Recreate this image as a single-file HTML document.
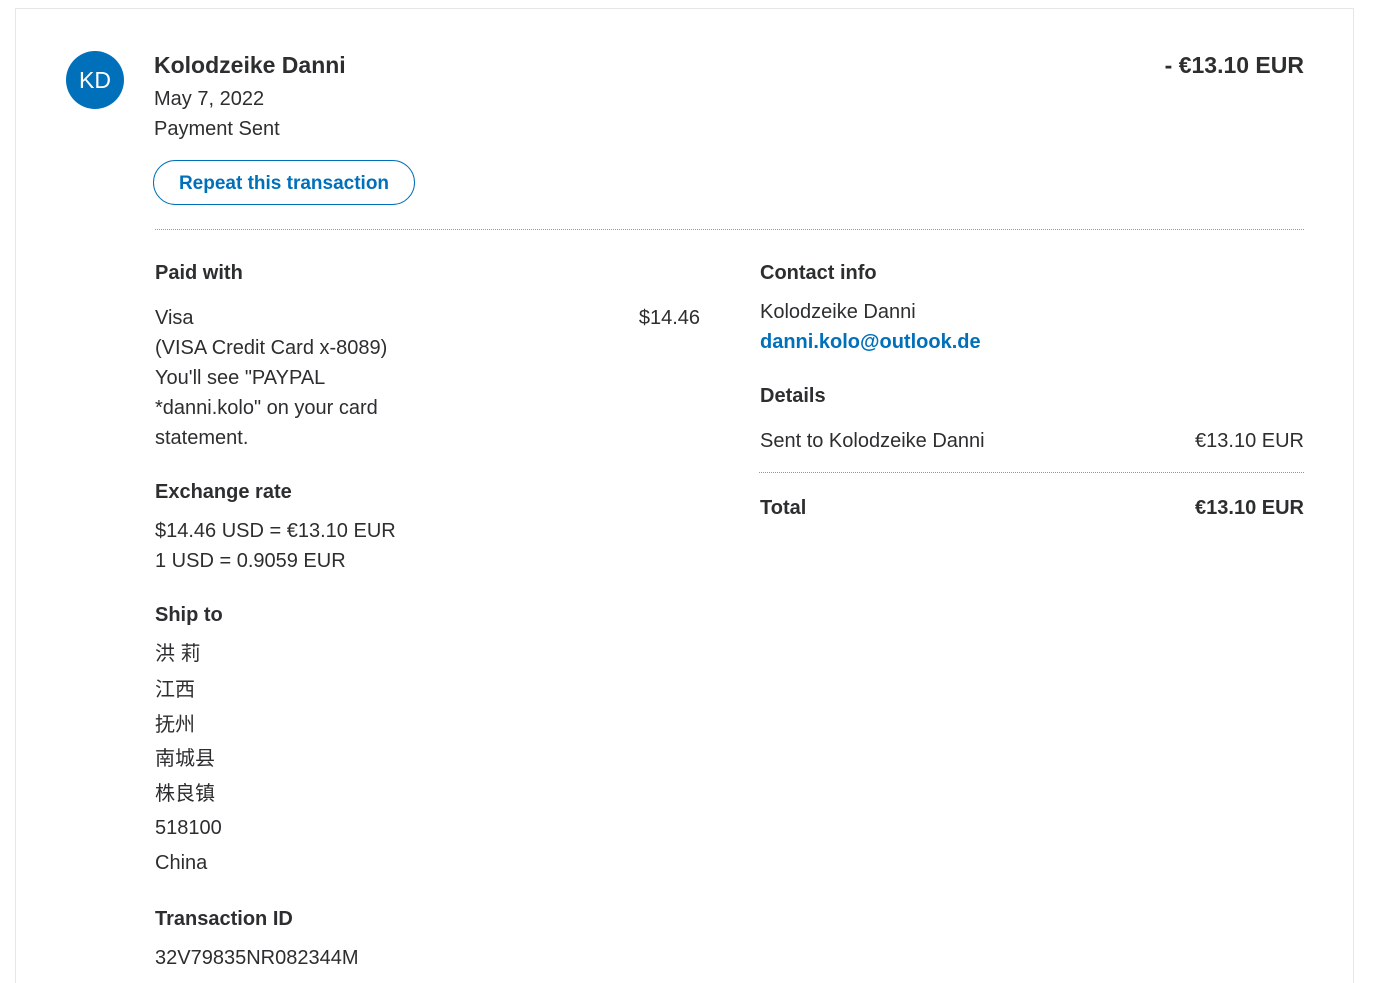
<!DOCTYPE html>
<html><head><meta charset="utf-8"><style>
*{margin:0;padding:0;box-sizing:border-box}
html,body{width:1377px;height:983px;overflow:hidden}
body{background:#fff;font-family:"Liberation Sans","Noto Sans CJK SC",sans-serif;color:#2c2e2f;position:relative}
.card{position:absolute;left:15px;top:8px;width:1339px;height:975px;border:1px solid #e6e6e6;border-bottom:none}
.a{position:absolute;white-space:nowrap;font-size:20px;line-height:30px}
.b{font-weight:bold}
.h{font-weight:bold;font-size:20px}
.av{position:absolute;left:66px;top:51px;width:58px;height:58px;border-radius:50%;background:#0070ba;color:#fff;font-size:23px;text-align:center;line-height:58px}
.btn{position:absolute;left:153px;top:160px;width:262px;height:45px;border:1px solid #0070ba;border-radius:23px;color:#0070ba;font-weight:bold;font-size:19px;text-align:center;line-height:45px}
.dl{position:absolute;height:0;border-top:1px dotted #9a9a9a}
.blue{color:#0070ba;font-weight:bold}
</style></head><body>
<div class="card"></div>
<div class="av">KD</div>
<div class="a b" style="left:154px;top:50px;font-size:23px">Kolodzeike Danni</div>
<div class="a" style="left:154px;top:84px">May 7, 2022</div>
<div class="a" style="left:154px;top:114px">Payment Sent</div>
<div class="a b" style="right:73px;top:50px;font-size:23px">- €13.10 EUR</div>
<div class="btn">Repeat this transaction</div>
<div class="dl" style="left:155px;top:229px;width:1149px"></div>

<div class="a h" style="left:155px;top:258px">Paid with</div>
<div class="a" style="left:155px;top:303px">Visa</div>
<div class="a" style="right:677px;top:303px">$14.46</div>
<div class="a" style="left:155px;top:333px">(VISA Credit Card x-8089)</div>
<div class="a" style="left:155px;top:363px">You'll see "PAYPAL</div>
<div class="a" style="left:155px;top:393px">*danni.kolo" on your card</div>
<div class="a" style="left:155px;top:423px">statement.</div>

<div class="a h" style="left:155px;top:477px">Exchange rate</div>
<div class="a" style="left:155px;top:516px">$14.46 USD = €13.10 EUR</div>
<div class="a" style="left:155px;top:546px">1 USD = 0.9059 EUR</div>

<div class="a h" style="left:155px;top:600px">Ship to</div>
<div class="a" style="left:155px;top:639px">洪 莉</div>
<div class="a" style="left:155px;top:675px">江西</div>
<div class="a" style="left:155px;top:710px">抚州</div>
<div class="a" style="left:155px;top:744px">南城县</div>
<div class="a" style="left:155px;top:779px">株良镇</div>
<div class="a" style="left:155px;top:813px">518100</div>
<div class="a" style="left:155px;top:848px">China</div>

<div class="a h" style="left:155px;top:904px">Transaction ID</div>
<div class="a" style="left:155px;top:943px">32V79835NR082344M</div>

<div class="a h" style="left:760px;top:258px">Contact info</div>
<div class="a" style="left:760px;top:297px">Kolodzeike Danni</div>
<div class="a blue" style="left:760px;top:327px">danni.kolo@outlook.de</div>
<div class="a h" style="left:760px;top:381px">Details</div>
<div class="a" style="left:760px;top:426px">Sent to Kolodzeike Danni</div>
<div class="a" style="right:73px;top:426px">€13.10 EUR</div>
<div class="dl" style="left:759px;top:472px;width:545px"></div>
<div class="a h" style="left:760px;top:493px">Total</div>
<div class="a h" style="right:73px;top:493px">€13.10 EUR</div>
</body></html>
